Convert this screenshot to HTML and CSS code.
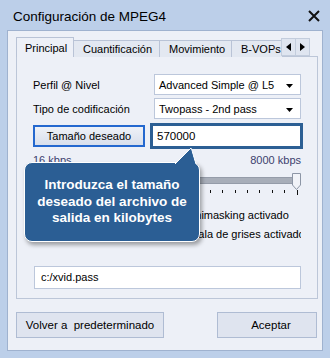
FILE: index.html
```html
<!DOCTYPE html>
<html lang="es">
<head>
    <meta charset="UTF-8">
    <meta name="viewport" content="width=device-width, initial-scale=1.0">
    <title>Configuración de MPEG4</title>
    <link rel="stylesheet" href="styles.css">
</head>
<body>
    <div class="window">
        <div class="titlebar">
            <span class="title">Configuración de MPEG4</span>
            <svg class="close" width="12" height="12" viewBox="0 0 12 12">
                <path d="M1 1 L11 11 M11 1 L1 11" stroke="#111" stroke-width="2" fill="none"/>
            </svg>
        </div>

        <div class="client">
            <div class="tabs">
                <div class="tab-list">
                    <div class="tab active">Principal</div>
                    <div class="tab">Cuantificación</div>
                    <div class="tab">Movimiento</div>
                    <div class="tab">B-VOPs</div>
                </div>
                <div class="tab-scroll">
                    <div class="arrow">
                        <svg width="5" height="8" viewBox="0 0 5 8"><path d="M5 0 L0 4 L5 8 Z" fill="#000"/></svg>
                    </div>
                    <div class="arrow">
                        <svg width="5" height="8" viewBox="0 0 5 8"><path d="M0 0 L5 4 L0 8 Z" fill="#000"/></svg>
                    </div>
                </div>
            </div>

            <div class="panel">
                <div class="row">
                    <span class="label">Perfil @ Nivel</span>
                    <div class="select">
                        <span>Advanced Simple @ L5</span>
                        <svg width="7" height="4" viewBox="0 0 7 4"><path d="M0 0 L7 0 L3.5 4 Z" fill="#000"/></svg>
                    </div>
                </div>
                <div class="row">
                    <span class="label">Tipo de codificación</span>
                    <div class="select">
                        <span>Twopass - 2nd pass</span>
                        <svg width="7" height="4" viewBox="0 0 7 4"><path d="M0 0 L7 0 L3.5 4 Z" fill="#000"/></svg>
                    </div>
                </div>
                <div class="row size-row">
                    <button class="size-btn">Tamaño deseado</button>
                    <div class="size-input">570000</div>
                </div>

                <div class="slider">
                    <div class="slider-labels">
                        <span>16 kbps</span>
                        <span>8000 kbps</span>
                    </div>
                    <div class="track">
                        <svg class="thumb" width="9" height="17" viewBox="0 0 9 17">
                            <path d="M0.5 0.5 H8.5 V12 L4.5 16.5 L0.5 12 Z" fill="#f1f3f8" stroke="#8d96a6"/>
                        </svg>
                    </div>
                    <div class="ticks">
                        <i class="long"></i><i></i><i></i><i></i><i></i><i></i><i></i><i></i><i></i><i></i><i></i>
                        <i></i><i></i><i></i><i></i><i></i><i></i><i></i><i></i><i></i><i></i><i class="long"></i>
                    </div>
                </div>

                <div class="checks">
                    <div class="check-row">
                        <span class="check"><span class="box"></span>Lumimasking activado</span>
                    </div>
                    <div class="check-row">
                        <span class="check"><span class="box"></span>Escala de grises activado</span>
                    </div>
                </div>

                <div class="path">c:/xvid.pass</div>

                <div class="tooltip">
                    <svg class="tip" width="26" height="17" viewBox="0 0 26 17">
                        <path d="M1 17 L17 1 L22 17" fill="#2b5e94" stroke="#fff" stroke-width="1"/>
                        <path d="M2 17 L17 2 L21 17 Z" fill="#2b5e94"/>
                    </svg>
                    Introduzca el tamaño<br>deseado del archivo de<br>salida en kilobytes
                </div>
            </div>

            <div class="footer">
                <button class="btn">Volver a&nbsp; predeterminado</button>
                <button class="btn btn-ok">Aceptar</button>
            </div>
        </div>
    </div>
</body>
</html>
```

FILE: styles.css
```css
* {
    margin: 0;
    padding: 0;
    box-sizing: border-box;
}

body {
    font-family: "Liberation Sans", Arial, sans-serif;
    font-size: 11px;
    color: #000;
    background-color: #bccfe9;
}

.window {
    width: 330px;
    height: 358px;
    background-color: #bccfe9;
    padding: 0 7px;
}

.titlebar {
    height: 30px;
    display: flex;
    align-items: center;
    justify-content: space-between;
    padding: 2px 3px 0 6px;
}

.title {
    font-size: 13.5px;
}

.close {
    display: block;
}

.client {
    height: 321px;
    background-color: #edf0f7;
    border: 1px solid #9fb2cf;
    padding: 6px 4px 0 8px;
}

/* tabs */
.tabs {
    display: flex;
    height: 20px;
    position: relative;
    z-index: 1;
}

.tab-list {
    display: flex;
    width: 266px;
    overflow: hidden;
}

.tab {
    flex-shrink: 0;
    height: 17px;
    margin-top: 3px;
    padding: 0 9px;
    line-height: 16px;
    background-color: #e3e8f1;
    border: 1px solid #b9c3d6;
    border-bottom: none;
    margin-left: -1px;
}

.tab:first-child {
    margin-left: 0;
}

.tab:nth-child(2) { width: 87px; }
.tab:nth-child(3) { width: 73px; padding-left: 9px; }
.tab:nth-child(4) { width: 60px; }

.tab.active {
    width: 58px;
    height: 21px;
    margin-top: 0;
    padding: 2px 0 0 8px;
    background-color: #edf0f7;
    position: relative;
    z-index: 2;
}

.tab-scroll {
    display: flex;
    margin-top: 1px;
}

.arrow {
    width: 15px;
    height: 18px;
    background-color: #dfe5f0;
    border: 1px solid #c3cddd;
    display: flex;
    align-items: center;
    justify-content: center;
    margin-left: -1px;
}

.arrow svg {
    display: block;
}

/* panel */
.panel {
    position: relative;
    height: 243px;
    margin-top: -1px;
    border: 1px solid #bcc6d8;
    padding: 17px 16px 0 16px;
}

.row {
    display: flex;
    align-items: center;
    height: 21px;
    margin-bottom: 3px;
}

.label {
    width: 121px;
}

.select {
    flex: 1;
    height: 21px;
    background-color: #fff;
    border: 1px solid #bcc7db;
    display: flex;
    align-items: center;
    justify-content: space-between;
    padding: 0 7px 0 4px;
}

.select svg {
    display: block;
    margin-top: 2px;
}

.size-row {
    height: 26px;
    margin-top: 4px;
    margin-right: -2px;
    margin-bottom: 0;
}

.size-btn {
    width: 112px;
    height: 22px;
    font-family: inherit;
    font-size: 11px;
    color: #000;
    border: 2px solid #2468cf;
    background: linear-gradient(#eef1f7, #d8dfec);
}

.size-input {
    flex: 1;
    height: 26px;
    margin-left: 5px;
    background-color: #fff;
    border: 3px solid #2c5f94;
    padding-left: 4px;
    line-height: 20px;
    font-size: 11.5px;
}

/* slider */
.slider-labels {
    display: flex;
    justify-content: space-between;
    margin-top: 5px;
    height: 12px;
    line-height: 12px;
    color: #3c3f6e;
}

.track {
    position: relative;
    height: 7px;
    margin-top: 11px;
    background-color: #a8aeb9;
    border: 1px solid #959ca9;
    border-radius: 1px;
}

.thumb {
    position: absolute;
    right: -1px;
    top: -5px;
}

.ticks {
    display: flex;
    justify-content: space-between;
    margin-top: 6px;
    padding: 0 3px 0 2px;
}

.ticks i {
    display: block;
    width: 1px;
    height: 3px;
    background-color: #111;
}

.ticks i.long {
    height: 5px;
}

/* checks */
.checks {
    margin-top: 13px;
}

.check-row {
    display: flex;
    height: 14px;
    margin-bottom: 5px;
    padding-left: 128px;
    white-space: nowrap;
    overflow: hidden;
}

.check {
    display: flex;
    align-items: center;
    flex-shrink: 0;
}

.check .box {
    width: 13px;
    height: 13px;
    margin-right: 6px;
    background-color: #fff;
    border: 1px solid #8e9bb0;
}

.path {
    margin-top: 25px;
    height: 23px;
    margin-left: 1px;
    background-color: #fff;
    border: 1px solid #bcc7db;
    padding-left: 6px;
    line-height: 21px;
}

/* tooltip */
.tooltip {
    position: absolute;
    left: 7px;
    top: 105px;
    width: 176px;
    height: 80px;
    background-color: #2b5e94;
    border: 1px solid #fff;
    border-radius: 8px;
    box-shadow: 2px 3px 4px rgba(0, 0, 0, 0.35);
    color: #fff;
    font-weight: bold;
    font-size: 13.5px;
    line-height: 16.5px;
    text-align: center;
    padding-top: 14px;
}

.tip {
    position: absolute;
    left: 149px;
    top: -16px;
    display: block;
}

/* footer */
.footer {
    display: flex;
    justify-content: space-between;
    margin-top: 13px;
    padding-right: 1px;
}

.btn {
    width: 148px;
    height: 26px;
    font-family: inherit;
    font-size: 11.5px;
    color: #000;
    background-color: #dfe4ef;
    border: 1px solid #afbcd3;
}

.btn-ok {
    width: 100px;
    padding-left: 8px;
}
```
